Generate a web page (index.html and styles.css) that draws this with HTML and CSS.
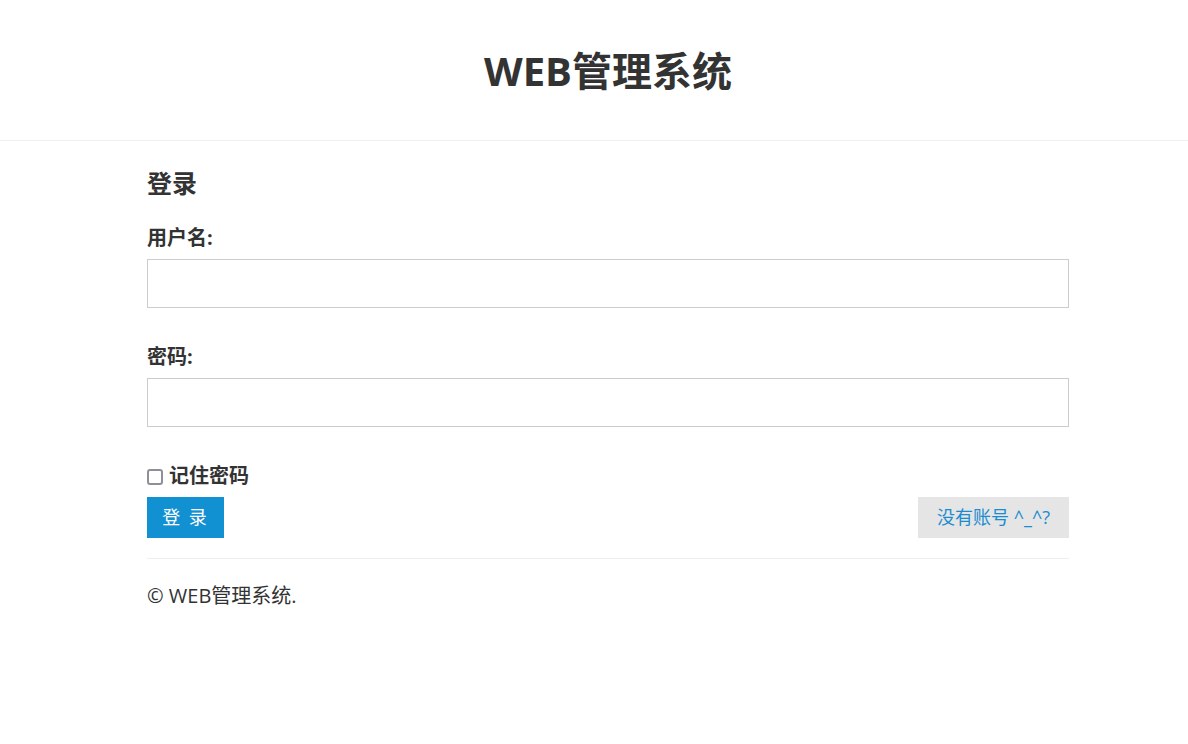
FILE: index.html
```html
<!DOCTYPE html>
<html lang="zh-CN">
<head>
  <meta charset="UTF-8">
  <title>WEB管理系统 - 登录</title>
  <link rel="stylesheet" href="styles.css">
</head>
<body>
  <header class="site-header">
    <div class="container">
      <h1>WEB管理系统</h1>
    </div>
  </header>

  <main class="container">
    <h2 class="form-title">登录</h2>
    <form class="login-form">
      <div class="form-group">
        <label for="username">用户名:</label>
        <input type="text" id="username">
      </div>
      <div class="form-group">
        <label for="password">密码:</label>
        <input type="password" id="password">
      </div>
      <label class="remember"><span class="check"></span>记住密码</label>
      <div class="actions">
        <button type="button" class="btn btn-primary">登 录</button>
        <a href="#" class="btn btn-light">没有账号 ^_^?</a>
      </div>
    </form>
    <hr>
    <footer class="footer">© WEB管理系统.</footer>
  </main>
</body>
</html>
```

FILE: styles.css
```css
body {
  margin: 0;
  font-family: "Open Sans", "Noto Sans CJK SC", sans-serif;
  color: #333;
  background: #fff;
}

.container {
  width: 922px;
  margin-left: 147px;
}

.site-header {
  border-bottom: 1px solid #eee;
  height: 140px;
  display: flex;
  align-items: center;
}

.site-header h1 {
  margin: 0;
  text-align: center;
  font-size: 40px;
  font-weight: 700;
  color: #333;
  line-height: 1;
  padding-top: 2px;
}

.form-title {
  margin: 26px 0 26px;
  font-size: 25px;
  font-weight: 700;
  line-height: 32px;
}

.form-group {
  margin-bottom: 36px;
}

label {
  display: block;
  font-size: 20px;
  font-weight: 700;
  line-height: 26px;
  margin-bottom: 8px;
}

input {
  display: block;
  box-sizing: border-box;
  width: 100%;
  height: 49px;
  border: 1px solid #ccc;
  padding: 6px 12px;
  font-size: 16px;
}

.remember {
  display: flex;
  align-items: center;
  gap: 6px;
  margin: 0 0 8px;
}

.check {
  flex-shrink: 0;
  width: 12px;
  height: 12px;
  border: 2px solid #8f8f98;
  border-radius: 3px;
  margin-top: 1px;
}

.actions {
  display: flex;
  justify-content: space-between;
}

.btn {
  display: inline-block;
  height: 41px;
  line-height: 41px;
  font-size: 18px;
  font-family: inherit;
  border: none;
  text-decoration: none;
  box-sizing: border-box;
  padding: 0;
  text-align: center;
}

.btn-primary {
  background: #1190d2;
  color: #fff;
  letter-spacing: 2px;
  width: 77px;
}

.btn-light {
  background: #e5e5e5;
  color: #1a8cd0;
  width: 151px;
}

hr {
  border: none;
  border-top: 1px solid #eee;
  margin: 20px 0 24px;
}

.footer {
  font-size: 20px;
  line-height: 26px;
}
```
